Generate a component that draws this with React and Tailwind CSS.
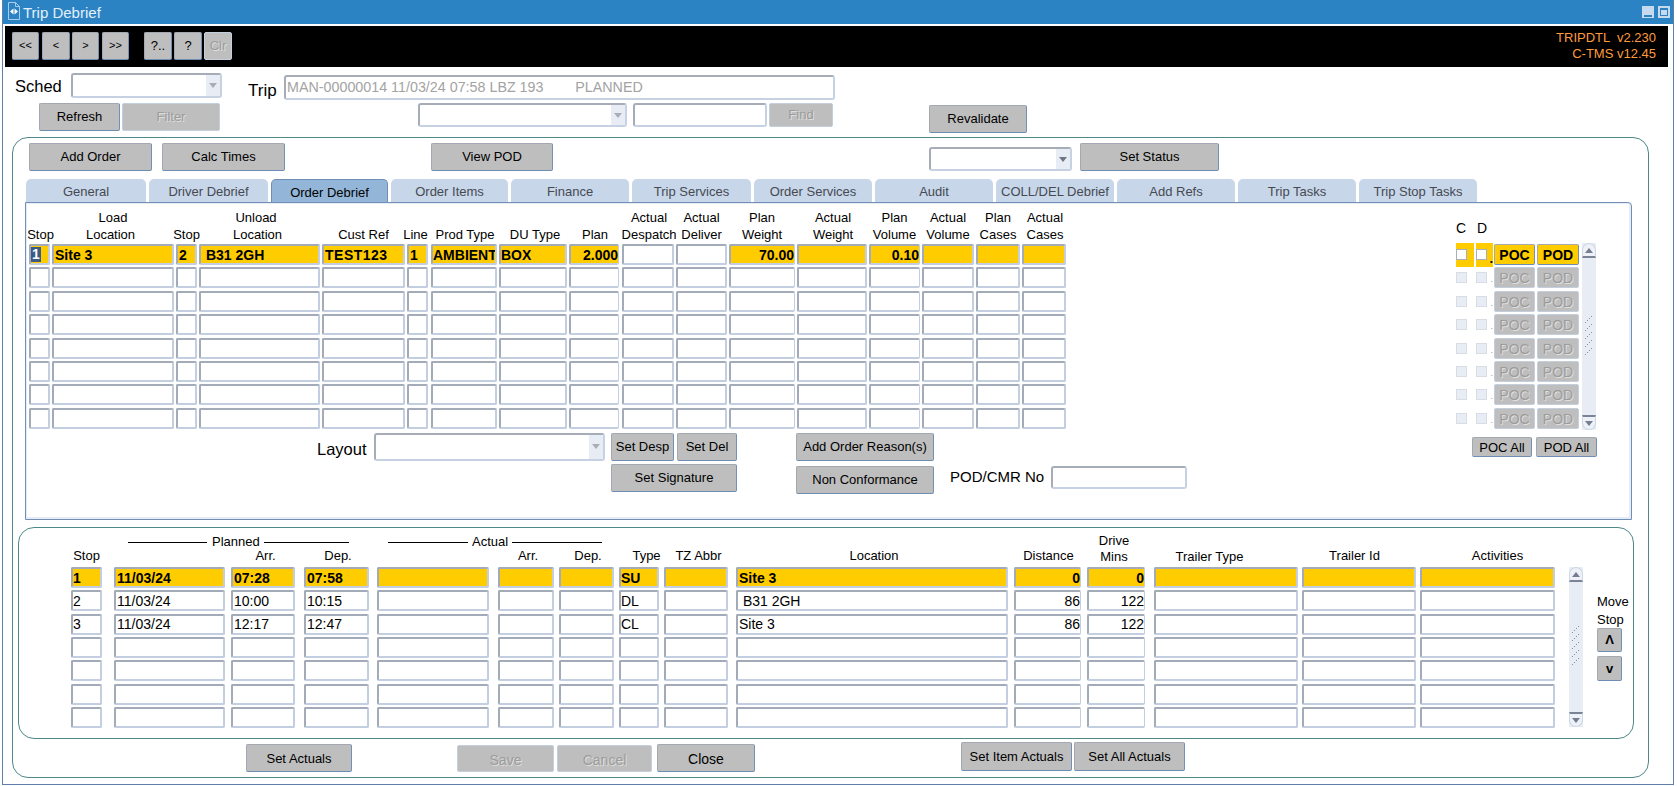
import React from "react";

const Btn = ({ className = "", disabled, children }) => (
  <button
    className={
      "flex shrink-0 items-center justify-center rounded-[2px] border bg-[#bebebe] p-0 pb-px leading-none " +
      (disabled
        ? "border-[#c4cfdd] text-[#9c9c9c] [text-shadow:1px_1px_0_#dedede] "
        : "border-[#a4a9b1] border-r-[#7391b5] border-b-[#6d8db3] text-black ") +
      className
    }
  >
    {children}
  </button>
);

const Arrow = ({ color = "#a9aeb6" }) => (
  <svg width="8" height="5" viewBox="0 0 8 5"><path d="M0 0h8L4 5z" fill={color} /></svg>
);

const Combo = ({ className = "", dark }) => (
  <div className={"flex shrink-0 justify-end overflow-hidden rounded-[3px] border-2 border-[#c6d2e3] border-t-[#a6adb9] border-l-[#a6adb9] bg-white " + className}>
    <div className="flex w-[14px] items-center justify-center bg-[#e8edf5]"><Arrow color={dark ? "#6f7787" : "#a9aeb6"} /></div>
  </div>
);

const Field = ({ className = "", children }) => (
  <div className={"flex shrink-0 items-center overflow-hidden whitespace-pre rounded-[3px] border-2 border-[#c6d2e3] border-t-[#a6adb9] border-l-[#a6adb9] bg-white " + className}>{children}</div>
);

const Cell = ({ className = "", yellow, bold, right, children }) => (
  <div
    className={
      "flex h-full shrink-0 items-center overflow-hidden whitespace-pre rounded-[2px] border-2 border-[#c3cfe1] border-t-[#a3abb8] border-l-[#a3abb8] text-[14px] leading-none text-black " +
      (yellow ? "bg-[#ffcc00] " : "bg-white ") +
      (bold ? "font-bold " : "") +
      (right ? "justify-end border-r-[1px] " : "") +
      className
    }
  >
    {children}
  </div>
);

const ScrollBar = ({ className = "" }) => (
  <div className={"flex w-[14px] shrink-0 flex-col items-stretch bg-[#e8edf5] " + className}>
    <div className="flex h-[15px] items-center justify-center rounded-t-[7px] border border-b-2 border-[#ccd6e4] border-b-[#7b8496] bg-[#eef2f8]">
      <svg width="8" height="5" viewBox="0 0 8 5"><path d="M4 0l4 5H0z" fill="#757e90" /></svg>
    </div>
    <div className="flex flex-1 items-center justify-center">
      <svg width="10" height="42" viewBox="0 0 10 42">
        {[0, 8, 16, 24, 32].map((y) => (
          <g key={y} fill="#8a93a5">
            <rect x="7" y={y} width="1" height="1" />
            <rect x="5" y={y + 2} width="1" height="1" />
            <rect x="3" y={y + 4} width="1" height="1" />
            <rect x="1" y={y + 6} width="1" height="1" />
          </g>
        ))}
      </svg>
    </div>
    <div className="flex h-[15px] items-center justify-center rounded-b-[7px] border border-t-2 border-[#ccd6e4] border-t-[#7b8496] bg-[#eef2f8]">
      <Arrow color="#757e90" />
    </div>
  </div>
);

const tabs = [
  ["General", "w-[120px]"],
  ["Driver Debrief", "w-[119px]"],
  ["Order Debrief", "w-[117px]"],
  ["Order Items", "w-[117px]"],
  ["Finance", "w-[118px]"],
  ["Trip Services", "w-[119px]"],
  ["Order Services", "w-[118px]"],
  ["Audit", "w-[118px]"],
  ["COLL/DEL Debrief", "w-[118px]"],
  ["Add Refs", "w-[118px]"],
  ["Trip Tasks", "w-[118px]"],
  ["Trip Stop Tasks", "w-[118px]"],
];

const topCols = [
  { c: "w-[21px]", h: ["", "Stop"], o: "pl-[2px]" },
  { c: "ml-[2px] w-[122px]", h: ["Load", "Location"], o: "", o2: "pr-[5px]" },
  { c: "ml-[2px] w-[21px]", h: ["", "Stop"], o: "" },
  { c: "ml-[2px] w-[121px]", h: ["Unload", "Location"], o: "pr-[7px]", o2: "pr-[4px]" },
  { c: "ml-[2px] w-[83px]", h: ["", "Cust Ref"], o: "" },
  { c: "ml-[2px] w-[21px]", h: ["", "Line"], o: "pr-[4px]" },
  { c: "ml-[3px] w-[66px]", h: ["", "Prod Type"], o: "pl-[2px]" },
  { c: "ml-[2px] w-[68px]", h: ["", "DU Type"], o: "pl-[4px]" },
  { c: "ml-[2px] w-[50px]", h: ["", "Plan"], o: "pl-[2px]" },
  { c: "ml-[3px] w-[52px]", h: ["Actual", "Despatch"], o: "pl-[2px]" },
  { c: "ml-[2px] w-[51px]", h: ["Actual", "Deliver"], o: "" },
  { c: "ml-[2px] w-[66px]", h: ["Plan", "Weight"], o: "" },
  { c: "ml-[2px] w-[70px]", h: ["Actual", "Weight"], o: "pl-[2px]" },
  { c: "ml-[2px] w-[51px]", h: ["Plan", "Volume"], o: "" },
  { c: "ml-[2px] w-[52px]", h: ["Actual", "Volume"], o: "" },
  { c: "ml-[2px] w-[44px]", h: ["Plan", "Cases"], o: "" },
  { c: "ml-[2px] w-[44px]", h: ["Actual", "Cases"], o: "pl-[2px]" },
];

const topFirst = ["1", "Site 3", "2", " B31 2GH", "TEST123", "1", "AMBIENT", "BOX", "2.000", "", "", "70.00", "", "0.10", "", "", ""];
const whiteInFirst = [9, 10];
const rightAligned = [8, 11, 13];

const lowCols = [
  { c: "w-[31px]", h: "Stop", p: "justify-center pb-[4px]" },
  { c: "ml-[12px] w-[111px]", h: "", p: "" },
  { c: "ml-[6px] w-[64px]", h: "Arr.", p: "justify-center pl-[5px] pb-[4px]" },
  { c: "ml-[9px] w-[65px]", h: "Dep.", p: "justify-center pl-[3px] pb-[4px]" },
  { c: "ml-[8px] w-[112px]", h: "", p: "" },
  { c: "ml-[9px] w-[56px]", h: "Arr.", p: "justify-center pl-[4px] pb-[4px]" },
  { c: "ml-[5px] w-[55px]", h: "Dep.", p: "justify-center pl-[3px] pb-[4px]" },
  { c: "ml-[5px] w-[40px]", h: "Type", p: "justify-center pl-[15px] pb-[4px]" },
  { c: "ml-[5px] w-[64px]", h: "TZ Abbr", p: "justify-center pl-[5px] pb-[4px]" },
  { c: "ml-[8px] w-[272px]", h: "Location", p: "justify-center pl-[4px] pb-[4px]" },
  { c: "ml-[6px] w-[67px]", h: "Distance", p: "justify-center pl-[2px] pb-[4px]" },
  { c: "ml-[6px] w-[58px]", h: "Mins", p: "justify-center pr-[4px] pb-[3px]" },
  { c: "ml-[9px] w-[144px]", h: "Trailer Type", p: "justify-center pr-[33px] pb-[3px]" },
  { c: "ml-[4px] w-[114px]", h: "Trailer Id", p: "justify-center pr-[9px] pb-[4px]" },
  { c: "ml-[4px] w-[135px]", h: "Activities", p: "justify-center pl-[20px] pb-[4px]" },
];

const lowData = [
  ["1", "11/03/24", "07:28", "07:58", "", "", "", "SU", "", "Site 3", "0", "0", "", "", ""],
  ["2", "11/03/24", "10:00", "10:15", "", "", "", "DL", "", " B31 2GH", "86", "122", "", "", ""],
  ["3", "11/03/24", "12:17", "12:47", "", "", "", "CL", "", "Site 3", "86", "122", "", "", ""],
  [], [], [], [],
];

const CheckBox = ({ active }) => (
  <div className={"h-[11px] w-[11px] border " + (active ? "border-[#a9b0bb] bg-white" : "border-[#d9dde3] bg-[#e8edf5]")} />
);

export default function App() {
  return (
    <div className="h-[786px] w-[1677px] overflow-hidden bg-white text-[13px] text-black [font-family:Liberation_Sans,Arial,sans-serif]">
      <div className="ml-[2px] flex h-[785px] w-[1672px] flex-col border-x border-b border-[#5f7fa8]">
        {/* title bar */}
        <div className="flex h-[24px] shrink-0 items-center bg-[#2c83c4] pl-[5px] pr-[3px]">
          <svg width="12" height="18" viewBox="0 0 12 18" className="mb-[2px]">
            <path d="M0.5 0.5h7l4 4v13h-11z" fill="#2c83c4" stroke="#a9cdee" />
            <path d="M7.5 0.5v4h4" fill="none" stroke="#a9cdee" />
            <path d="M5.5 6.5v6L2 9.5zM6.5 6.5v6L10 9.5z" fill="#ffffff" />
          </svg>
          <span className="ml-[3px] text-[15px] leading-none text-[#e3effa]">Trip Debrief</span>
          <div className="ml-auto flex gap-[4px]">
            <div className="flex h-[12px] w-[12px] items-end justify-center bg-[#c6daef] pb-[1px]"><div className="h-[2px] w-[8px] bg-[#2c83c4]" /></div>
            <div className="flex h-[12px] w-[12px] items-center justify-center bg-[#c6daef]"><div className="h-[8px] w-[8px] border border-t-2 border-[#2c83c4]" /></div>
          </div>
        </div>
        {/* toolbar */}
        <div className="mt-[2px] ml-[2px] flex h-[41px] w-[1663px] shrink-0 bg-black pt-[6px] pl-[7px] pr-[12px]">
          <div className="flex h-[28px] text-[11px]">
            <Btn className="w-[27px]">&lt;&lt;</Btn>
            <Btn className="ml-[3px] w-[28px]">&lt;</Btn>
            <Btn className="ml-[2px] w-[27px]">&gt;</Btn>
            <Btn className="ml-[3px] w-[27px]">&gt;&gt;</Btn>
            <Btn className="ml-[15px] w-[28px] text-[13px]">?..</Btn>
            <Btn className="ml-[2px] w-[28px] text-[13px]">?</Btn>
            <Btn disabled className="ml-[2px] w-[28px] text-[13px]">Clr</Btn>
          </div>
          <div className="ml-auto flex flex-col items-end text-[13px] text-[#ff9b3d]">
            <div className="h-[10px] overflow-hidden whitespace-pre leading-[12px]">TRIPDTL  v2.230</div>
            <div className="mt-[5px] leading-[13px]">C-TMS v12.45</div>
          </div>
        </div>
        {/* header form */}
        <div className="flex h-[70px] shrink-0 text-[16px]">
          <div className="ml-[12px] w-[220px] pt-[6px]">
            <div className="flex h-[25px] items-center">
              <span className="w-[56px] shrink-0 pt-[1px] text-[16.5px]">Sched</span>
              <Combo className="h-[25px] w-[151px]" />
            </div>
            <div className="mt-[5px] ml-[24px] flex h-[28px] text-[13px]">
              <Btn className="w-[81px]">Refresh</Btn>
              <Btn disabled className="ml-[2px] w-[98px]">Filter</Btn>
            </div>
          </div>
          <div className="ml-[13px] w-[590px] pt-[8px]">
            <div className="flex h-[25px] items-center">
              <span className="w-[36px] shrink-0 pt-[6px] text-[17px]">Trip</span>
              <Field className="h-[25px] w-[551px] pl-[1px] text-[14.3px] text-[#a3a3a3]">MAN-00000014 11/03/24 07:58 LBZ 193        PLANNED</Field>
            </div>
            <div className="mt-[3px] ml-[170px] flex h-[24px] text-[13px]">
              <Combo className="h-[24px] w-[209px]" />
              <Field className="ml-[6px] h-[24px] w-[134px]" />
              <Btn disabled className="ml-[2px] h-[24px] w-[64px]">Find</Btn>
            </div>
          </div>
          <div className="ml-[91px] pt-[38px] text-[13px]">
            <Btn className="h-[28px] w-[98px]">Revalidate</Btn>
          </div>
        </div>
        {/* outer panel */}
        <div className="ml-[9px] h-[641px] w-[1637px] shrink-0 rounded-[16px] border border-[#4e8888]">
          <div className="mt-[5px] ml-[16px] flex h-[28px] text-[13px]">
            <Btn className="w-[123px]">Add Order</Btn>
            <Btn className="ml-[10px] w-[123px]">Calc Times</Btn>
            <Btn className="ml-[146px] w-[122px]">View POD</Btn>
            <Combo className="ml-[376px] mt-[4px] h-[24px] w-[143px]" dark />
            <Btn className="ml-[8px] w-[139px]">Set Status</Btn>
          </div>
          <div className="mt-[8px] ml-[13px] flex h-[23px] gap-[3px]">
            {tabs.map(([t, w]) => (
              <div
                key={t}
                className={
                  "flex items-center justify-center whitespace-nowrap rounded-t-[5px] pt-[3px] text-[13px] " +
                  (t === "Order Debrief" ? "border border-b-0 border-[#6f8fb6] bg-[#93b6d8] text-black " : "bg-[#c8d6e9] text-[#454a52] ") +
                  w
                }
              >
                {t}
              </div>
            ))}
          </div>
          {/* tab panel */}
          <div className="ml-[12px] flex h-[318px] w-[1607px] rounded-tr-[4px] border border-[#7290b7] pl-[3px] pt-[5px] shadow-[inset_1px_1px_0_#e6ecf5,inset_-2px_-2px_0_#e6ecf5]">
            <div className="w-[1038px] shrink-0">
              <div className="flex h-[36px] pt-[1px]">
                {topCols.map((col, i) => (
                  <div key={i} className={"flex shrink-0 flex-col items-center leading-[18px] " + col.c}>
                    <span className={"h-[17px] whitespace-nowrap " + col.o}>{col.h[0]}</span>
                    <span className={"h-[18px] whitespace-nowrap " + (col.o2 || col.o)}>{col.h[1]}</span>
                  </div>
                ))}
              </div>
              <div className="flex flex-col gap-y-[2.4px]">
                {[0, 1, 2, 3, 4, 5, 6, 7].map((r) => (
                  <div key={r} className="flex h-[21px]">
                    {topCols.map((col, i) => {
                      const first = r === 0;
                      const white = whiteInFirst.includes(i);
                      return (
                        <Cell
                          key={i}
                          className={col.c + (first && !rightAligned.includes(i) && i > 0 && i !== 6 && i !== 7 ? " pl-[1px]" : "") + (first && i === 4 ? " tracking-[0.5px]" : "")}
                          yellow={first && !white}
                          bold={first}
                          right={rightAligned.includes(i)}
                        >
                          {first ? (i === 0 ? <span className="bg-[#3c5a85] px-[1px] leading-[15px] text-white">1</span> : topFirst[i]) : ""}
                        </Cell>
                      );
                    })}
                  </div>
                ))}
              </div>
              {/* controls */}
              <div className="mt-[4px] ml-[288px] flex">
                <span className="mt-[5px] w-[57px] shrink-0 text-[16.5px] leading-[22px]">Layout</span>
                <Combo className="h-[28px] w-[231px]" />
                <div className="ml-[6px] w-[126px] shrink-0">
                  <div className="flex h-[28px] justify-between">
                    <Btn className="w-[63px]">Set Desp</Btn>
                    <Btn className="w-[60px]">Set Del</Btn>
                  </div>
                  <Btn className="mt-[3px] h-[28px] w-[126px]">Set Signature</Btn>
                </div>
                <div className="ml-[59px] w-[138px] shrink-0">
                  <Btn className="h-[28px] w-[138px]">Add Order Reason(s)</Btn>
                  <Btn className="mt-[5px] h-[28px] w-[138px]">Non Conformance</Btn>
                </div>
                <div className="ml-[16px] mt-[33px] flex h-[23px] shrink-0 items-center text-[15px]">
                  <span className="w-[101px] shrink-0 whitespace-nowrap">POD/CMR No</span>
                  <Field className="h-[23px] w-[136px]" />
                </div>
              </div>
            </div>
            {/* right block */}
            <div className="ml-[389px] w-[141px] shrink-0">
              <div className="flex h-[36px] items-end pb-[7px] text-[14px] leading-[18px]">
                <span className="w-[21px]">C</span>
                <span>D</span>
              </div>
              <div className="flex">
                <div className="flex flex-col gap-y-[2.4px]">
                  {[0, 1, 2, 3, 4, 5, 6, 7].map((r) => (
                    <div key={r} className="flex h-[21px] items-start">
                      <div className={"-mt-px h-[24px] w-[18px] pt-[6px] " + (r === 0 ? "bg-[#ffcc00]" : "")}><CheckBox active={r === 0} /></div>
                      <div className={"-mt-px ml-[2px] h-[24px] w-[17px] pt-[6px] " + (r === 0 ? "bg-[#ffcc00]" : "")}><CheckBox active={r === 0} /></div>
                      <div className="relative">
                        <span className={"absolute right-0 top-[8px] leading-none " + (r === 0 ? "font-bold text-[13px]" : "text-[9px] text-[#999]")}>.</span>
                      </div>
                      <Btn disabled={r !== 0} className={"ml-[1px] h-[21px] w-[41px] pt-[2px] " + (r === 0 ? "bg-[#ffcc00] text-[14px] font-bold" : "text-[14px]")}>POC</Btn>
                      <Btn disabled={r !== 0} className={"ml-[2px] h-[21px] w-[42px] pt-[2px] " + (r === 0 ? "bg-[#ffcc00] text-[14px] font-bold" : "text-[14px]")}>POD</Btn>
                    </div>
                  ))}
                </div>
                <ScrollBar className="-mt-px ml-[3px] h-[187px]" />
              </div>
              <div className="mt-[7px] ml-[16px] flex h-[20px] w-[125px] justify-between text-[13px]">
                <Btn className="w-[60px] pt-px">POC All</Btn>
                <Btn className="w-[61px] pt-px">POD All</Btn>
              </div>
            </div>
          </div>
          {/* lower panel */}
          <div className="mt-[7px] ml-[5px] flex h-[212px] w-[1616px] rounded-[16px] border border-[#4e8888] pt-[3px]">
            <div className="ml-[52px] w-[1484px] shrink-0">
              <div className="flex h-[18px] items-start leading-[18px]">
                <div className="ml-[57px] mt-[2px] flex w-[221px] shrink-0 items-center">
                  <div className="h-px w-[79px] bg-black" />
                  <span className="ml-[5px]">Planned</span>
                  <div className="ml-[4px] h-px flex-1 bg-black" />
                </div>
                <div className="ml-[39px] mt-[2px] flex w-[214px] shrink-0 items-center">
                  <div className="h-px w-[80px] bg-black" />
                  <span className="ml-[4px]">Actual</span>
                  <div className="ml-[4px] h-px flex-1 bg-black" />
                </div>
                <div className="ml-[485px] mt-[1px] w-[54px] shrink-0 text-center">Drive</div>
              </div>
              <div className="flex h-[18px]">
                {lowCols.map((col, i) => (
                  <div key={i} className={"flex shrink-0 items-end whitespace-nowrap leading-[15px] " + col.c + " " + col.p}>{col.h}</div>
                ))}
              </div>
              <div className="flex flex-col gap-y-[2.33px]">
                {lowData.map((row, r) => (
                  <div key={r} className="flex h-[21px]">
                    {lowCols.map((col, i) => (
                      <Cell
                        key={i}
                        className={col.c + (i === 1 || i === 2 || i === 3 ? " pl-[1px]" : "") + (i === 9 ? " pl-[1px]" : "")}
                        yellow={r === 0}
                        bold={r === 0}
                        right={i === 10 || i === 11}
                      >
                        {row[i] || ""}
                      </Cell>
                    ))}
                  </div>
                ))}
              </div>
            </div>
            <ScrollBar className="ml-[14px] mt-[36px] h-[160px]" />
            <div className="ml-[14px] mt-[62px] w-[30px]">
              <div className="whitespace-nowrap leading-[18px]">Move</div>
              <div className="whitespace-nowrap leading-[18px]">Stop</div>
              <Btn className="-mt-px h-[24px] w-[25px] font-bold">Λ</Btn>
              <Btn className="mt-[4px] h-[25px] w-[25px] font-bold">v</Btn>
            </div>
          </div>
          {/* bottom buttons */}
          <div className="ml-[233px] flex text-[13px]">
            <Btn className="mt-[5px] h-[28px] w-[106px] pt-px">Set Actuals</Btn>
            <Btn disabled className="mt-[6px] ml-[105px] h-[27px] w-[97px] pt-[3px] text-[14px]">Save</Btn>
            <Btn disabled className="mt-[6px] ml-[3px] h-[27px] w-[95px] pt-[3px] text-[14px]">Cancel</Btn>
            <Btn className="mt-[5px] ml-[5px] h-[28px] w-[98px] pt-[3px] text-[14px]">Close</Btn>
            <Btn className="mt-[3px] ml-[206px] h-[29px] w-[111px]">Set Item Actuals</Btn>
            <Btn className="mt-[3px] ml-[2px] h-[29px] w-[111px]">Set All Actuals</Btn>
          </div>
        </div>
      </div>
    </div>
  );
}
